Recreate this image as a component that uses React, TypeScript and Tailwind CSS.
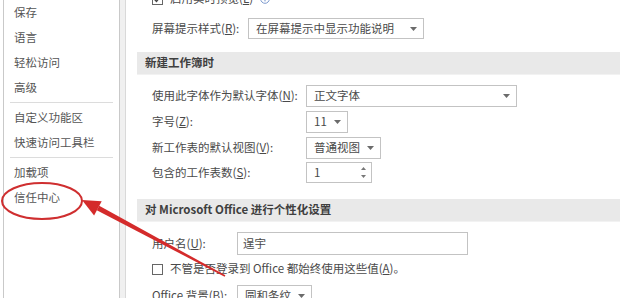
import type { ReactNode } from 'react';

const font = { fontFamily: '"Noto Sans CJK SC", "Noto Sans", sans-serif' };

const navGroups = [
  ['保存', '语言', '轻松访问', '高级'],
  ['自定义功能区', '快速访问工具栏'],
  ['加载项', '信任中心'],
];

function Caret() {
  return (
    <svg width="7" height="4" viewBox="0 0 7 4" className="shrink-0">
      <path d="M0 0h7L3.5 4z" fill="#6b6b6b" />
    </svg>
  );
}

function Select({ value, className }: { value: string; className: string }) {
  return (
    <div className={`flex h-full items-center justify-between border border-[#c3c3c3] bg-white pl-[7px] pr-[6px] ${className}`}>
      <span>{value}</span>
      <Caret />
    </div>
  );
}

function Label({ children, className }: { children: ReactNode; className: string }) {
  return <div className={`shrink-0 ${className}`}>{children}</div>;
}

function Row({ children, className }: { children: ReactNode; className: string }) {
  return <div className={`flex shrink-0 items-center pl-[15px] ${className}`}>{children}</div>;
}

function Band({ children, className }: { children: ReactNode; className: string }) {
  return (
    <div className={`flex h-[23px] shrink-0 items-center border-b border-[#f2f2f2] bg-[#e9e9e9] pl-[8px] font-bold text-[#3f3f3f] ${className}`}>
      {children}
    </div>
  );
}

function CheckBox({ checked }: { checked?: boolean }) {
  return (
    <div className="flex h-[11px] w-[11px] shrink-0 items-center justify-center border border-[#666] bg-white">
      {checked && (
        <svg width="9" height="8" viewBox="0 0 9 8">
          <path d="M1 4l2.5 2.5L8 1" fill="none" stroke="#444" strokeWidth="1.2" />
        </svg>
      )}
    </div>
  );
}

export default function App() {
  return (
    <div className="relative flex h-[298px] w-[620px] overflow-hidden bg-white text-[11.5px] leading-none text-[#4a4a4a]" style={font}>
      {/* sidebar */}
      <div className="ml-[3px] w-[117px] shrink-0 border-x border-[#c9c9c9] bg-white">
        {navGroups.map((group, gi) => (
          <div key={gi}>
            {gi > 0 && <div className="mx-[6px] my-[2px] h-px bg-[#dcdcdc]" />}
            {group.map((item) => (
              <div key={item} className="flex h-[25px] items-center pl-[10px] pt-px text-[#555]">
                {item}
              </div>
            ))}
          </div>
        ))}
      </div>
      <div className="w-[6px] shrink-0 border-r border-[#d9d9d9] bg-[#f0f0f0]" />

      {/* main */}
      <div className="flex min-w-0 flex-1 flex-col pl-[11px]">
        <Row className="mt-[-9px] h-[16px] gap-[7px]">
          <CheckBox checked />
          <span>
            启用实时预览(<u>L</u>)
          </span>
          <svg width="10" height="10" viewBox="0 0 10 10">
            <circle cx="5" cy="5" r="4.3" fill="none" stroke="#6f8fc8" strokeWidth="0.9" />
            <path d="M5 4.2v3.2M5 2.4v0.9" stroke="#6f8fc8" strokeWidth="1" />
          </svg>
        </Row>

        <Row className="mt-[11px] h-[21px]">
          <Label className="w-[96px]">
            屏幕提示样式(<u>R</u>):
          </Label>
          <Select value="在屏幕提示中显示功能说明" className="w-[176px]" />
        </Row>

        <Band className="mt-[13px]">新建工作簿时</Band>

        <Row className="mt-[10px] h-[22px]">
          <Label className="w-[154px]">
            使用此字体作为默认字体(<u>N</u>):
          </Label>
          <Select value="正文字体" className="w-[211px]" />
        </Row>
        <Row className="mt-[4px] h-[22px]">
          <Label className="w-[154px]">
            字号(<u>Z</u>):
          </Label>
          <Select value="11" className="w-[42px]" />
        </Row>
        <Row className="mt-[4px] h-[22px]">
          <Label className="w-[154px]">
            新工作表的默认视图(<u>V</u>):
          </Label>
          <Select value="普通视图" className="w-[75px]" />
        </Row>
        <Row className="mt-[3px] h-[21px]">
          <Label className="w-[154px]">
            包含的工作表数(<u>S</u>):
          </Label>
          <div className="flex h-full w-[66px] items-center justify-between border border-[#c3c3c3] pl-[7px] pr-[5px]">
            <span>1</span>
            <div className="flex flex-col gap-[5px]">
              <svg width="5" height="3" viewBox="0 0 5 3">
                <path d="M0 3h5L2.5 0z" fill="#777" />
              </svg>
              <svg width="5" height="3" viewBox="0 0 5 3">
                <path d="M0 0h5L2.5 3z" fill="#777" />
              </svg>
            </div>
          </div>
        </Row>

        <Band className="mt-[16px]">对 Microsoft Office 进行个性化设置</Band>

        <Row className="mt-[10px] h-[23px]">
          <Label className="w-[85px]">
            用户名(<u>U</u>):
          </Label>
          <div className="flex h-full w-[231px] items-center border border-[#c3c3c3] pl-[5px]">逞宇</div>
        </Row>
        <Row className="mt-[6px] h-[16px] gap-[7px]">
          <CheckBox />
          <span>
            不管是否登录到 Office 都始终使用这些值(<u>A</u>)。
          </span>
        </Row>
        <Row className="mt-[8px] h-[21px]">
          <Label className="w-[85px]">
            Office 背景(<u>B</u>):
          </Label>
          <Select value="圆和条纹" className="w-[75px]" />
        </Row>
      </div>

      {/* annotation */}
      <svg className="pointer-events-none absolute left-0 top-0" width="620" height="298" viewBox="0 0 620 298">
        <ellipse cx="42" cy="201" rx="40" ry="18" fill="none" stroke="#cf2f30" strokeWidth="2" />
        <polygon points="82,200 101.7,201.3 94.1,215.5" fill="#d42b2b" />
        <polygon points="96.8,210.2 99.2,205.8 225.4,275.3 224.6,276.7" fill="#d42b2b" />
      </svg>
    </div>
  );
}
